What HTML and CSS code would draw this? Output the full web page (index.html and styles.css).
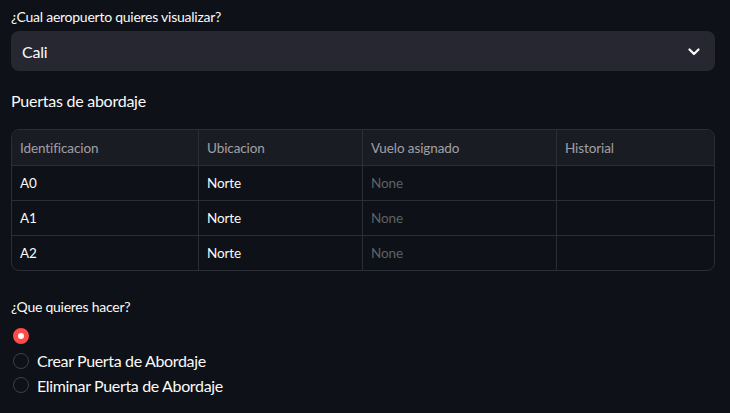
FILE: index.html
```html
<!DOCTYPE html>
<html lang="es">
<head>
<meta charset="utf-8">
<link rel="stylesheet" href="styles.css">
</head>
<body>
<main class="page">
  <section class="field">
    <label class="label">¿Cual aeropuerto quieres visualizar?</label>
    <div class="select">
      <span class="select-value">Cali</span>
      <svg class="chevron" width="12" height="8" viewBox="0 0 12 8"><path d="M1.5 1.5 L6 6 L10.5 1.5" fill="none" stroke="#fafafa" stroke-width="2.2" stroke-linecap="round" stroke-linejoin="round"/></svg>
    </div>
  </section>

  <h3 class="heading">Puertas de abordaje</h3>

  <div class="table">
    <div class="row head">
      <div class="cell c1">Identificacion</div>
      <div class="cell c2">Ubicacion</div>
      <div class="cell c3">Vuelo asignado</div>
      <div class="cell c4">Historial</div>
    </div>
    <div class="row">
      <div class="cell c1">A0</div>
      <div class="cell c2">Norte</div>
      <div class="cell c3 none">None</div>
      <div class="cell c4"></div>
    </div>
    <div class="row">
      <div class="cell c1">A1</div>
      <div class="cell c2">Norte</div>
      <div class="cell c3 none">None</div>
      <div class="cell c4"></div>
    </div>
    <div class="row">
      <div class="cell c1">A2</div>
      <div class="cell c2">Norte</div>
      <div class="cell c3 none">None</div>
      <div class="cell c4"></div>
    </div>
  </div>

  <section class="field radios">
    <label class="label">¿Que quieres hacer?</label>
    <div class="radio-list">
      <div class="radio"><span class="dot checked"></span><span class="radio-label"></span></div>
      <div class="radio"><span class="dot"></span><span class="radio-label">Crear Puerta de Abordaje</span></div>
      <div class="radio"><span class="dot"></span><span class="radio-label">Eliminar Puerta de Abordaje</span></div>
    </div>
  </section>
</main>
</body>
</html>
```

FILE: styles.css
```css
* { box-sizing: border-box; }
html, body {
  margin: 0;
  background: #0e1117;
  color: #fafafa;
  font-family: "Lato", "Noto Sans", sans-serif;
}
.page {
  padding: 6px 15px 0 11px;
  width: 730px;
}
.field { display: flex; flex-direction: column; }
.label {
  font-size: 14px;
  letter-spacing: -0.25px;
  line-height: 21px;
  height: 21px;
  margin-bottom: 4px;
  color: #fafafa;
}
.select {
  height: 40px;
  background: #262730;
  border-radius: 8px;
  display: flex;
  align-items: center;
  justify-content: space-between;
  padding: 0 15px 0 11px;
}
.select-value { font-size: 16px; letter-spacing: -0.2px; }
.chevron { display: block; margin-top: 1px; }
.heading {
  margin: 19px 0 0 0;
  font-size: 16px;
  font-weight: 400;
  letter-spacing: -0.25px;
  line-height: 22px;
  height: 22px;
}
.table {
  margin-top: 17px;
  border: 1px solid #2b2e36;
  border-radius: 8px;
  overflow: hidden;
  font-size: 13.5px;
  letter-spacing: -0.1px;
}
.row {
  display: grid;
  grid-template-columns: 186px 164px 194px 1fr;
  height: 35px;
  border-top: 1px solid #2b2e36;
}
.row.head {
  border-top: none;
  height: 35px;
  background: #1a1c24;
  color: rgba(250, 250, 250, 0.6);
}
.cell {
  display: flex;
  align-items: center;
  padding-left: 8px;
  border-left: 1px solid #2b2e36;
}
.cell.c1 { border-left: none; }
.cell.none { color: rgba(250, 250, 250, 0.35); }
.radios { margin-top: 25px; }
.radio-list { display: flex; flex-direction: column; margin-top: 3px; }
.radio {
  display: flex;
  align-items: center;
  height: 24.5px;
}
.dot {
  width: 16px;
  height: 16px;
  border-radius: 50%;
  border: 1.5px solid #3d4049;
  margin: 0 8px 0 2px;
  flex: none;
}
.dot.checked {
  border: 5.5px solid #ff4b4b;
  background: #fafafa;
}
.radio-label { font-size: 16px; letter-spacing: -0.35px; }
```
